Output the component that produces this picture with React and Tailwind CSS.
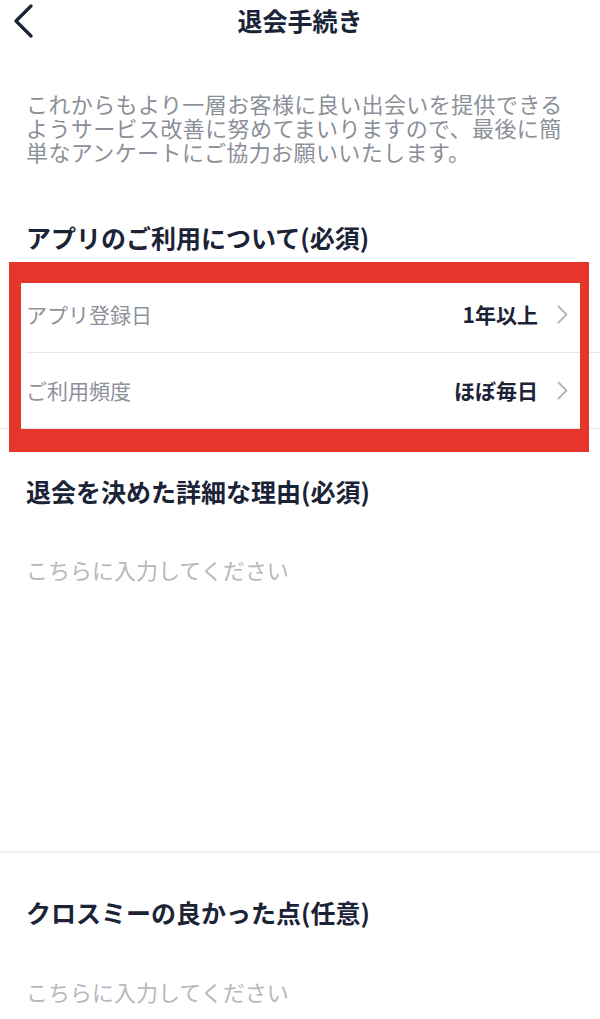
const font = { fontFamily: '"Noto Sans CJK JP", "Noto Sans", sans-serif' };

function Chevron() {
  return (
    <svg width="11" height="19" viewBox="0 0 11 19" fill="none">
      <path
        d="M1.5 1.5 L9.5 9.5 L1.5 17.5"
        stroke="#b4b4b4"
        strokeWidth="1.8"
        strokeLinecap="round"
        strokeLinejoin="round"
      />
    </svg>
  );
}

function SelectRow({ label, value, divider }) {
  return (
    <div>
      <div className="flex h-[75px] items-center justify-between pl-[26px] pr-[32px]">
        <span className="text-[21px] text-[#8d9199]">{label}</span>
        <div className="flex items-center gap-[19px]">
          <span className="text-[21px] font-bold text-[#1b2337]">{value}</span>
          <Chevron />
        </div>
      </div>
      {divider && <div className="ml-[26px] h-px bg-[#e6e6e6]" />}
    </div>
  );
}

function Heading({ children, className = '' }) {
  return (
    <h2 className={`px-[26px] text-[25px] font-bold leading-[32px] text-[#1b2337] ${className}`}>
      {children}
    </h2>
  );
}

function Placeholder({ className = '' }) {
  return (
    <p className={`px-[26px] text-[22px] leading-[30px] text-[#b5b8bd] ${className}`}>
      こちらに入力してください
    </p>
  );
}

export default function App() {
  return (
    <div className="relative h-[1019px] w-[600px] overflow-hidden bg-white" style={font}>
      <header className="relative flex h-[42px] items-center justify-center">
        <svg
          className="absolute left-[12px] top-[4px]"
          width="24"
          height="34"
          viewBox="0 0 24 34"
          fill="none"
        >
          <path
            d="M19 2 L4 17 L19 32"
            stroke="#1b2337"
            strokeWidth="3.2"
            strokeLinecap="round"
            strokeLinejoin="round"
          />
        </svg>
        <h1 className="text-[25px] font-bold text-[#1b2337]">退会手続き</h1>
      </header>

      <p className="mt-[49px] px-[26px] text-[22px] leading-[24px] tracking-[0.4px] text-[#8b8f98]">
        これからもより一層お客様に良い出会いを提供できる
        <br />
        ようサービス改善に努めてまいりますので、最後に簡
        <br />
        単なアンケートにご協力お願いいたします。
      </p>

      <Heading className="mt-[58px]">アプリのご利用について(必須)</Heading>

      <div className="mt-[24px]">
        <SelectRow label="アプリ登録日" value="1年以上" divider />
        <SelectRow label="ご利用頻度" value="ほぼ毎日" />
        <div className="h-px bg-[#e6e6e6]" />
      </div>

      <Heading className="mt-[46px]">退会を決めた詳細な理由(必須)</Heading>
      <Placeholder className="mt-[47px]" />
      <div className="mt-[267px] h-[2px] bg-[#eeeeee]" />

      <Heading className="mt-[43px]">クロスミーの良かった点(任意)</Heading>
      <Placeholder className="mt-[48px]" />

      {/* red annotation frame */}
      <div className="pointer-events-none absolute left-[9px] top-[262px] h-[190px] w-[580px] border-b-[23px] border-l-[12px] border-r-[9px] border-t-[21px] border-[#e6352a]" />
    </div>
  );
}
